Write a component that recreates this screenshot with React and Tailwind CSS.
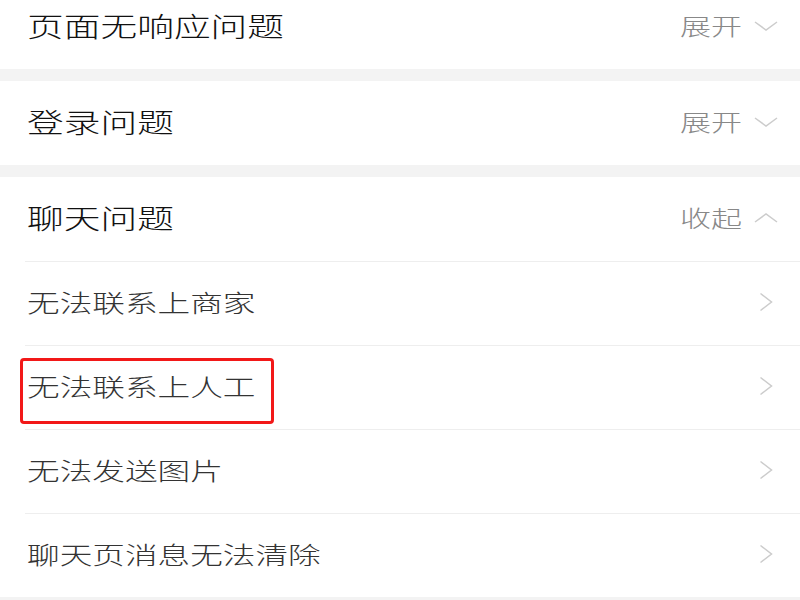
import React from "react";

const font = { fontFamily: '"Noto Sans CJK SC", "Noto Sans", sans-serif' };

function ChevronDown() {
  return (
    <svg width="24" height="12" viewBox="0 0 24 12" className="block">
      <path d="M1 2 L12 10 L23 2" fill="none" stroke="#cccccc" strokeWidth="1.5" />
    </svg>
  );
}
function ChevronUp() {
  return (
    <svg width="24" height="12" viewBox="0 0 24 12" className="block">
      <path d="M1 10 L12 2 L23 10" fill="none" stroke="#cccccc" strokeWidth="1.5" />
    </svg>
  );
}
function ChevronRight() {
  return (
    <svg width="14" height="20" viewBox="0 0 14 20" className="block">
      <path d="M1.5 1.5 L12.5 10 L1.5 18.5" fill="none" stroke="#cccccc" strokeWidth="1.5" />
    </svg>
  );
}

function Header({ title, action, open }) {
  return (
    <div className="h-[84px] flex items-center justify-between pl-[27px] pr-[22px] pb-[3px] bg-white">
      <span className="inline-block origin-left scale-x-[1.36] text-[27px] font-light text-[#111111] leading-none">
        {title}
      </span>
      <div className="flex items-center gap-[12px]">
        <span className="inline-block origin-right scale-x-[1.35] text-[23px] font-light text-[#888888] leading-none">
          {action}
        </span>
        {open ? <ChevronUp /> : <ChevronDown />}
      </div>
    </div>
  );
}

function Row({ text }) {
  return (
    <div className="ml-[25px] h-[84px] border-t border-[#eeeeee] flex items-center justify-between pl-[2px] pr-[27px] pb-[4px]">
      <span className="inline-block origin-left scale-x-[1.36] text-[24px] font-light text-[#333333] leading-none">
        {text}
      </span>
      <ChevronRight />
    </div>
  );
}

export default function App() {
  return (
    <div style={font} className="w-[800px] h-[600px] overflow-hidden bg-[#f3f3f3] relative">
      <div className="-mt-[15px]">
        <Header title="页面无响应问题" action="展开" />
      </div>
      <div className="h-[12px] bg-[#f3f3f3]" />
      <Header title="登录问题" action="展开" />
      <div className="h-[12px] bg-[#f3f3f3]" />
      <div className="bg-white">
        <Header title="聊天问题" action="收起" open />
        <Row text="无法联系上商家" />
        <Row text="无法联系上人工" />
        <Row text="无法发送图片" />
        <Row text="聊天页消息无法清除" />
      </div>
      <div className="absolute left-[20px] top-[358px] w-[254px] h-[66px] border-[3px] border-[#f21818] rounded-[4px]" />
    </div>
  );
}
